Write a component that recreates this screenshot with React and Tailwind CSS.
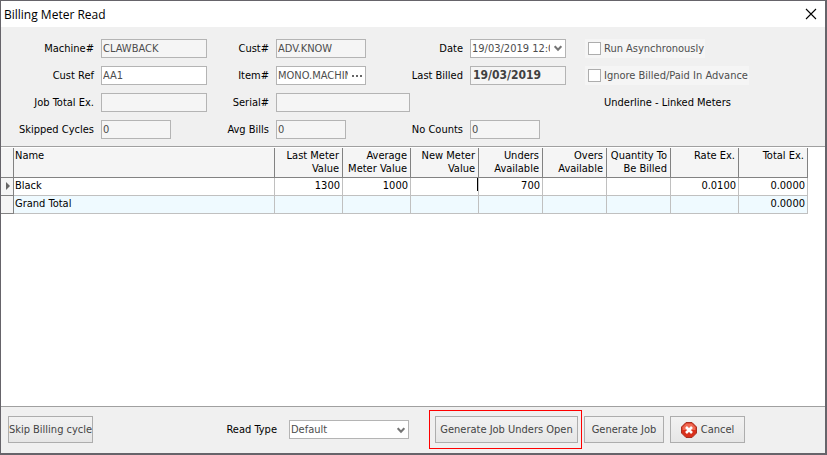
import React, { useState } from 'react';

const meters = [
  { name: 'Black', last: '1300', average: '1000', unders: '700', overs: '', quantity: '', rate: '0.0100', total: '0.0000' },
];

const headCell =
  'h-[30px] border-r border-b border-[#828282] bg-[#f5f5f5] py-px pr-[3px] pl-0 text-right align-top font-normal leading-[13px]';
const bodyCell = 'h-[18px] border-r border-b border-[#c0c0c0] p-0 pr-[2px] text-right align-top leading-[15px]';
const markCell = 'h-[18px] border-r border-b border-[#828282] bg-[#f5f5f5] p-0';
const button =
  'flex h-[27px] items-center justify-center whitespace-nowrap border border-[#adadad] bg-linear-to-b from-[#f2f2f2] to-[#e6e6e6] text-[#444444] hover:to-white';

const Chevron = () => (
  <svg width="8" height="7" viewBox="0 0 8 7" fill="none" stroke="#757575" strokeWidth="2">
    <path d="M0.7 1.2 L4 4.8 L7.3 1.2" />
  </svg>
);

const Field = ({ id, label, value, width, readOnly = true, bold = false }) => (
  <>
    <label htmlFor={id} className="justify-self-end whitespace-nowrap">
      {label}
    </label>
    <input
      id={id}
      type="text"
      defaultValue={value}
      readOnly={readOnly}
      className={`h-[19px] border border-[#b4b4b4] pb-px outline-none ${width} ${
        readOnly ? 'bg-[#f5f5f5]' : 'bg-white'
      } ${bold ? 'px-[2px] text-[12px] font-bold text-[#404040]' : 'px-px text-[#4d4d4d]'}`}
    />
  </>
);

const CheckOption = ({ label }) => (
  <label className="ml-3 flex h-[19px] items-center gap-[3px] justify-self-start bg-[#f5f5f5] pr-px pl-[3px] whitespace-nowrap text-[#4d4d4d]">
    <input type="checkbox" className="size-[13px] appearance-none border border-[#adadad] bg-white checked:bg-[#757575]" />
    {label}
  </label>
);

const App = () => {
  const [readType, setReadType] = useState('Default');

  return (
    <div className="flex min-h-screen flex-col border border-r-2 border-b-2 border-[#66646a] bg-white font-['DejaVu_Sans_Condensed','DejaVu_Sans',sans-serif] text-[11px] leading-[13px] text-black">
      <header className="flex h-[26px] items-center justify-between pr-2 pl-[3px]">
        <h1 className="font-['Open_Sans',sans-serif] text-[12px]">Billing Meter Read</h1>
        <button type="button" aria-label="Close">
          <svg width="12" height="12" viewBox="0 0 12 12" stroke="black" strokeWidth="1.1">
            <path d="M1 1 L11 11 M11 1 L1 11" />
          </svg>
        </button>
      </header>

      <section className="grid grid-cols-[93px_106px_55px_130px_50px_96px_1fr] items-center gap-x-[7px] gap-y-2 border-b border-[#a0a0a0] bg-[#f0f0f0] pt-3 pb-[7px]">
        <Field id="machine" label="Machine#" value="CLAWBACK" width="w-[106px]" />
        <Field id="cust" label="Cust#" value="ADV.KNOW" width="w-[90px]" />
        <label htmlFor="date" className="justify-self-end">
          Date
        </label>
        <div className="flex h-[19px] items-center border border-[#b4b4b4] bg-white pr-[3px]">
          <input
            id="date"
            type="text"
            defaultValue="19/03/2019 12:00"
            className="ml-px w-0 flex-1 pb-px text-[#4d4d4d] outline-none"
          />
          <button type="button" aria-label="Pick date" className="pl-1">
            <Chevron />
          </button>
        </div>
        <CheckOption label="Run Asynchronously" />

        <Field id="custRef" label="Cust Ref" value="AA1" width="w-[106px]" readOnly={false} />
        <label htmlFor="item" className="justify-self-end">
          Item#
        </label>
        <div className="flex h-[19px] w-[90px] items-center border border-[#b4b4b4] bg-white pr-[2px]">
          <input
            id="item"
            type="text"
            defaultValue="MONO.MACHINE"
            className="w-0 flex-1 pb-px pl-px text-[#4d4d4d] outline-none"
          />
          <button type="button" aria-label="Choose item" className="pl-1">
            <svg width="11" height="2" viewBox="0 0 11 2" fill="#666666">
              <path d="M0 0h2v2H0z M4 0h2v2H4z M8 0h2v2H8z" />
            </svg>
          </button>
        </div>
        <Field id="lastBilled" label="Last Billed" value="19/03/2019" width="w-[96px]" bold />
        <CheckOption label="Ignore Billed/Paid In Advance" />

        <Field id="jobTotal" label="Job Total Ex." value="" width="w-[106px]" />
        <Field id="serial" label="Serial#" value="" width="w-[134px]" />
        <p className="col-start-7 ml-[31px]">Underline - Linked Meters</p>

        <Field id="skipped" label="Skipped Cycles" value="0" width="w-[70px]" />
        <Field id="avgBills" label="Avg Bills" value="0" width="w-[70px]" />
        <Field id="noCounts" label="No Counts" value="0" width="w-[70px]" />
      </section>

      <main className="flex-1 border-b border-[#a0a0a0] pt-px pr-[17px]">
        <table className="w-full table-fixed border-separate border-spacing-0">
          <colgroup>
            <col className="w-[13px]" />
            <col />
            <col className="w-[68px]" />
            <col className="w-[68px]" />
            <col className="w-[68px]" />
            <col className="w-[64px]" />
            <col className="w-[64px]" />
            <col className="w-[64px]" />
            <col className="w-[68px]" />
            <col className="w-[69px]" />
          </colgroup>
          <thead>
            <tr>
              <td className={markCell} />
              <th className="h-[30px] border-r border-b border-[#828282] bg-[#f5f5f5] px-px py-px text-left align-top font-normal">
                Name
              </th>
              <th className={headCell}>Last Meter Value</th>
              <th className={headCell}>Average Meter Value</th>
              <th className={headCell}>New Meter Value</th>
              <th className={headCell}>Unders Available</th>
              <th className={headCell}>Overs Available</th>
              <th className={headCell}>Quantity To Be Billed</th>
              <th className={headCell}>Rate Ex.</th>
              <th className={headCell}>Total Ex.</th>
            </tr>
          </thead>
          <tbody>
            {meters.map((meter) => (
              <tr key={meter.name}>
                <td className={`${markCell} align-top`}>
                  <svg className="mt-1 ml-[5px] block" width="4" height="8" viewBox="0 0 4 8" fill="#666666">
                    <path d="M0 0 L4 4 L0 8 Z" />
                  </svg>
                </td>
                <td className="border-r border-b border-[#c0c0c0] p-0 pl-px align-top leading-[15px]">{meter.name}</td>
                <td className={bodyCell}>{meter.last}</td>
                <td className={bodyCell}>{meter.average}</td>
                <td className="h-[18px] border-r border-b border-[#c0c0c0] p-0 align-top">
                  <div className="flex h-[13px]">
                    <input type="text" aria-label="New Meter Value" className="w-0 flex-1 text-right outline-none" />
                    <span className="w-px bg-black" />
                  </div>
                </td>
                <td className={bodyCell}>{meter.unders}</td>
                <td className={bodyCell}>{meter.overs}</td>
                <td className={bodyCell}>{meter.quantity}</td>
                <td className={bodyCell}>{meter.rate}</td>
                <td className={bodyCell}>{meter.total}</td>
              </tr>
            ))}
            <tr className="bg-[#effaff]">
              <td className={markCell} />
              <td className="border-r border-b border-[#c0c0c0] p-0 pl-px align-top leading-[15px]">Grand Total</td>
              <td className={bodyCell} />
              <td className={bodyCell} />
              <td className={bodyCell} />
              <td className={bodyCell} />
              <td className={bodyCell} />
              <td className={bodyCell} />
              <td className={bodyCell} />
              <td className={bodyCell}>0.0000</td>
            </tr>
          </tbody>
        </table>
      </main>

      <footer className="flex h-[46px] items-center justify-between bg-[#f0f0f0] pr-20 pb-px pl-[7px]">
        <button type="button" className={`${button} w-[85px]`}>
          Skip Billing cycle
        </button>
        <div className="flex items-center">
          <label htmlFor="readType" className="mr-3">
            Read Type
          </label>
          <div className="relative mr-5">
            <select
              id="readType"
              value={readType}
              onChange={(e) => setReadType(e.target.value)}
              className="block h-[19px] w-[120px] appearance-none border border-[#b4b4b4] bg-white pl-px text-[#4d4d4d] outline-none"
            >
              <option>Default</option>
              <option>Estimated</option>
            </select>
            <span className="pointer-events-none absolute top-[7px] right-1">
              <Chevron />
            </span>
          </div>
          <div className="mr-[2px] border border-[#ff0000] py-[5px] pr-[3px] pl-[5px]">
            <button type="button" className={`${button} w-[143px]`}>
              Generate Job Unders Open
            </button>
          </div>
          <button type="button" className={`${button} mr-[6px] w-[80px]`}>
            Generate Job
          </button>
          <button type="button" className={`${button} w-[75px] gap-1`}>
            <svg width="16" height="16" viewBox="0 0 16 16">
              <path d="M5 0.5 H11 L15.5 5 V11 L11 15.5 H5 L0.5 11 V5 Z" fill="#d9301c" stroke="#a83022" />
              <path d="M5.3 1.6 H10.7 L14.4 5.3 V8 H1.6 V5.3 Z" fill="#ef6a54" />
              <path d="M5 5 L11 11 M11 5 L5 11" stroke="white" strokeWidth="2.6" />
            </svg>
            Cancel
          </button>
        </div>
      </footer>
    </div>
  );
};

export default App;
